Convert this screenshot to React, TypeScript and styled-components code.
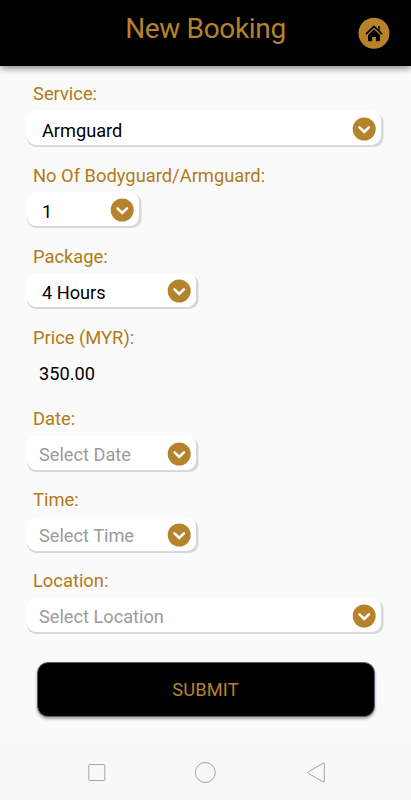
import React from 'react';
import styled, { createGlobalStyle } from 'styled-components';

const gold = '#b5832b';

const GlobalStyle = createGlobalStyle`
  *, *::before, *::after { box-sizing: border-box; }
  body { margin: 0; background: #fafafa; font-family: Roboto, sans-serif; }
`;

const Screen = styled.div`
  display: flex;
  flex-direction: column;
  height: 800px;
  background: #fafafa;
  overflow: hidden;
`;

const Header = styled.header`
  display: grid;
  grid-template-columns: 1fr auto 1fr;
  flex: none;
  height: 66px;
  padding-right: 21px;
  padding-left: 21px;
  background: #000;
  box-shadow: 0 2px 7px rgba(0, 0, 0, 0.5);
`;

const Title = styled.h1`
  grid-column: 2;
  margin: 12px 0 0;
  font-size: 28px;
  line-height: 33px;
  letter-spacing: -0.33px;
  font-weight: 400;
  color: ${gold};
`;

const HomeButton = styled.button`
  justify-self: end;
  width: 32px;
  height: 32px;
  margin-top: 17px;
  padding: 0;
  border: 0;
  background: none;
  svg { display: block; }
`;

const Form = styled.form`
  display: flex;
  flex-direction: column;
  flex: 1;
  padding: 14px 27px 0;
`;

const Field = styled.div`
  flex: none;
  height: 81.17px;
`;

const Label = styled.div`
  height: 31px;
  padding-top: 0.45px;
  padding-left: 6px;
  font-size: 18.33px;
  line-height: 28px;
  color: #b07a17;
  white-space: nowrap;
`;

const Select = styled.div<{ $width: number; $placeholder?: boolean }>`
  display: flex;
  align-items: center;
  justify-content: space-between;
  width: ${(p) => p.$width}px;
  height: 34px;
  padding: 2px 5px 0 ${(p) => (p.$placeholder ? 12 : 15)}px;
  border-radius: 9px;
  background: #fff;
  box-shadow: 2.5px 2px 0 #d6d8da, 0 2px 0 #d6d8da;
  font-size: 18.2px;
  line-height: 24px;
  color: ${(p) => (p.$placeholder ? '#9b9b9b' : '#000')};
  white-space: nowrap;
  span { padding-top: 3px; }
  svg { flex: none; display: block; }
`;

const Price = styled.div`
  padding: 8px 0 0 12px;
  font-size: 18.2px;
  line-height: 24px;
  color: #000;
`;

const Submit = styled.button`
  flex: none;
  width: 338px;
  height: 54.5px;
  margin: 14px 0 0 9.5px;
  padding: 0;
  border: 1px solid #56606c;
  border-radius: 11px;
  background: #000;
  box-shadow: 0 2px 3px rgba(0, 0, 0, 0.35);
  font-family: inherit;
  font-size: 18.3px;
  letter-spacing: 0.1px;
  color: ${gold};
`;

const NavBar = styled.nav`
  display: flex;
  flex: none;
  justify-content: space-between;
  height: 56px;
  padding: 16px 83px 0 84px;
  background: #f8f8f8;
  svg { fill: none; stroke: #a3a3a3; stroke-width: 1; }
`;

const Chevron = () => (
  <svg width="24" height="24" viewBox="0 0 24 24">
    <circle cx="12.2" cy="12" r="11.5" fill={gold} />
    <path d="M7.5 10.4 12.2 15 16.9 10.4" fill="none" stroke="#fff" strokeWidth="2.5" strokeLinecap="round" />
  </svg>
);

const Home = () => (
  <svg width="32" height="32" viewBox="0 0 32 32">
    <circle cx="16" cy="16.2" r="15.5" fill={gold} />
    <path d="M8.5 16.6 16 9.4 23.5 16.6" fill="none" stroke="#000" strokeWidth="1.7" strokeLinecap="round" strokeLinejoin="round" />
    <path d="M20.2 9h1.6v5l-1.6-1.6z" fill="#000" />
    <path d="M16 12.2 22 18V23.2a1 1 0 0 1-1 1H17.9V20H14.1V24.2H11a1 1 0 0 1-1-1V18Z" fill="#000" />
  </svg>
);

type FieldData = { label: string; value: string; width?: number; placeholder?: boolean };

const fields: FieldData[] = [
  { label: 'Service:', value: 'Armguard', width: 354 },
  { label: 'No Of Bodyguard/Armguard:', value: '1', width: 112 },
  { label: 'Package:', value: '4 Hours', width: 169 },
  { label: 'Price (MYR):', value: '350.00' },
  { label: 'Date:', value: 'Select Date', width: 169, placeholder: true },
  { label: 'Time:', value: 'Select Time', width: 169, placeholder: true },
  { label: 'Location:', value: 'Select Location', width: 354, placeholder: true },
];

export default function App() {
  return (
    <Screen>
      <GlobalStyle />
      <Header>
        <Title>New Booking</Title>
        <HomeButton type="button" aria-label="Home"><Home /></HomeButton>
      </Header>
      <Form>
        {fields.map((f) => (
          <Field key={f.label}>
            <Label>{f.label}</Label>
            {f.width ? (
              <Select $width={f.width} $placeholder={f.placeholder}>
                <span>{f.value}</span>
                <Chevron />
              </Select>
            ) : (
              <Price>{f.value}</Price>
            )}
          </Field>
        ))}
        <Submit type="button">SUBMIT</Submit>
      </Form>
      <NavBar>
        <svg width="24" height="26" viewBox="0 0 24 26"><rect x="4.8" y="4.5" width="16" height="16" rx="1" /></svg>
        <svg width="24" height="26" viewBox="0 0 24 26"><circle cx="11.3" cy="12.5" r="10" /></svg>
        <svg width="24" height="26" viewBox="0 0 24 26"><path d="M19 3.3Q20.3 2.6 20.3 4V21Q20.3 22.4 19 21.8L4.5 13.5Q3.4 12.5 4.5 11.7Z" /></svg>
      </NavBar>
    </Screen>
  );
}
